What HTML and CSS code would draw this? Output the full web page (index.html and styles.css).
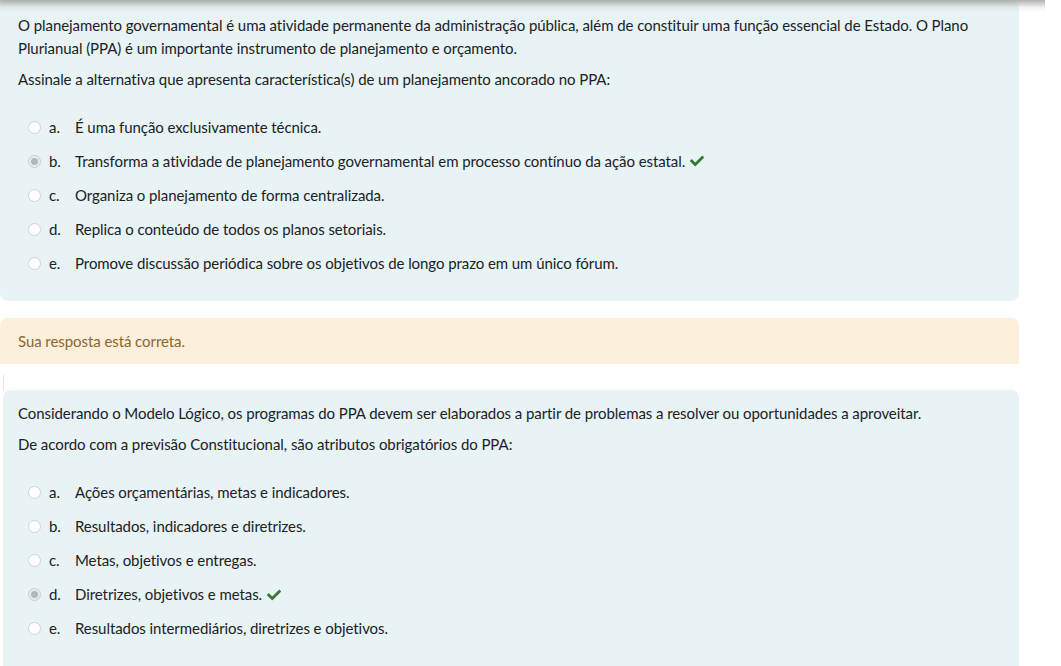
FILE: index.html
```html
<!DOCTYPE html>
<html lang="pt-BR">
<head>
<meta charset="utf-8">
<title>Questionário</title>
<link rel="stylesheet" href="styles.css">
</head>
<body>
<div class="top-shadow"></div>
<main class="page">
  <section class="qcard first">
    <p class="qtext">O planejamento governamental é uma atividade permanente da administração pública, além de constituir uma função essencial de Estado. O Plano Plurianual (PPA) é um importante instrumento de planejamento e orçamento.</p>
    <p class="qtext">Assinale a alternativa que apresenta característica(s) de um planejamento ancorado no PPA:</p>
    <div class="answers">
      <div class="opt"><span class="radio"></span><span class="letter">a.</span><span class="label">É uma função exclusivamente técnica.</span></div>
      <div class="opt"><span class="radio checked"></span><span class="letter">b.</span><span class="label">Transforma a atividade de planejamento governamental em processo contínuo da ação estatal.</span><svg class="check" viewBox="0 0 512 512"><path d="M173.9 439.4l-166.4-166.4c-10-10-10-26.2 0-36.2l36.2-36.2c10-10 26.2-10 36.2 0L192 312.7 432.1 72.6c10-10 26.2-10 36.2 0l36.2 36.2c10 10 10 26.2 0 36.2l-294.4 294.4c-10 10-26.2 10-36.2 0z"/></svg></div>
      <div class="opt"><span class="radio"></span><span class="letter">c.</span><span class="label">Organiza o planejamento de forma centralizada.</span></div>
      <div class="opt"><span class="radio"></span><span class="letter">d.</span><span class="label">Replica o conteúdo de todos os planos setoriais.</span></div>
      <div class="opt"><span class="radio"></span><span class="letter">e.</span><span class="label">Promove discussão periódica sobre os objetivos de longo prazo em um único fórum.</span></div>
    </div>
  </section>

  <div class="feedback">Sua resposta está correta.</div>

  <div class="divider"></div>

  <section class="qcard second">
    <p class="qtext">Considerando o Modelo Lógico, os programas do PPA devem ser elaborados a partir de problemas a resolver ou oportunidades a aproveitar.</p>
    <p class="qtext">De acordo com a previsão Constitucional, são atributos obrigatórios do PPA:</p>
    <div class="answers">
      <div class="opt"><span class="radio"></span><span class="letter">a.</span><span class="label">Ações orçamentárias, metas e indicadores.</span></div>
      <div class="opt"><span class="radio"></span><span class="letter">b.</span><span class="label">Resultados, indicadores e diretrizes.</span></div>
      <div class="opt"><span class="radio"></span><span class="letter">c.</span><span class="label">Metas, objetivos e entregas.</span></div>
      <div class="opt"><span class="radio checked"></span><span class="letter">d.</span><span class="label">Diretrizes, objetivos e metas.</span><svg class="check" viewBox="0 0 512 512"><path d="M173.9 439.4l-166.4-166.4c-10-10-10-26.2 0-36.2l36.2-36.2c10-10 26.2-10 36.2 0L192 312.7 432.1 72.6c10-10 26.2-10 36.2 0l36.2 36.2c10 10 10 26.2 0 36.2l-294.4 294.4c-10 10-26.2 10-36.2 0z"/></svg></div>
      <div class="opt"><span class="radio"></span><span class="letter">e.</span><span class="label">Resultados intermediários, diretrizes e objetivos.</span></div>
    </div>
  </section>
</main>
</body>
</html>
```

FILE: styles.css
```css
* { box-sizing: border-box; }

html, body {
  margin: 0;
  padding: 0;
  background: #ffffff;
}

body {
  font-family: Lato, "Liberation Sans", sans-serif;
  font-size: 15px;
  line-height: 22.5px;
  letter-spacing: -0.07px;
  color: #1d2125;
  overflow: hidden;
}

.top-shadow {
  position: absolute;
  top: 0;
  left: 0;
  width: 1045px;
  height: 12px;
  background: linear-gradient(to bottom, rgba(150, 150, 150, 0.75), rgba(200, 200, 200, 0.25) 60%, rgba(255, 255, 255, 0));
  z-index: 2;
  pointer-events: none;
}

.page {
  width: 1019px;
  display: flex;
  flex-direction: column;
}

.qcard {
  background: #e7f3f5;
  border-radius: 8px;
}

.qcard.first {
  padding: 14px 18px 21px 18px;
}

.qcard.second {
  margin-left: 3px;
  padding: 12px 18px 20px 15px;
  min-height: 290px;
}

.qtext {
  margin: 0 0 8.5px 0;
}

.answers {
  margin-top: 20px;
  display: flex;
  flex-direction: column;
}

.opt {
  display: flex;
  align-items: center;
  height: 34px;
  padding-left: 10px;
}

.radio {
  width: 13px;
  height: 13px;
  border-radius: 50%;
  border: 1px solid #cfd4d6;
  background: #ffffff;
  flex: none;
  margin-right: 8px;
  position: relative;
}

.radio.checked {
  background: #e9ecee;
  border-color: #c9cdd0;
}

.radio.checked::after {
  content: "";
  position: absolute;
  left: 2px;
  top: 2px;
  width: 7px;
  height: 7px;
  border-radius: 50%;
  background: #b3b7ba;
}

.letter {
  width: 26px;
  flex: none;
}

.check {
  width: 14px;
  height: 14px;
  fill: #357a32;
  margin-left: 5px;
  flex: none;
}

.feedback {
  margin-top: 17px;
  background: #fcefdc;
  color: #8e662e;
  border-radius: 8px 8px 0 0;
  padding: 12px 18px 11.5px 18px;
}

.divider {
  margin-top: 11px;
  margin-left: 3px;
  height: 15px;
  border-left: 1px solid #e3e6e8;
}
```
